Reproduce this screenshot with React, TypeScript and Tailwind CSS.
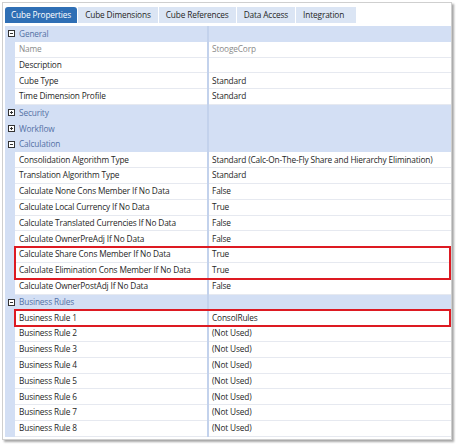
import { ReactNode } from "react";

type Row = { label: string; value?: string; muted?: boolean };

const tabs = ["Cube Properties", "Cube Dimensions", "Cube References", "Data Access", "Integration"];

function Toggle({ open }: { open: boolean }) {
  return (
    <svg width="7" height="7" viewBox="0 0 7 7" className="shrink-0">
      <rect x="0.5" y="0.5" width="6" height="6" fill="white" stroke="#333" />
      <line x1="2" y1="3.5" x2="5" y2="3.5" stroke="#333" />
      {!open && <line x1="3.5" y1="2" x2="3.5" y2="5" stroke="#333" />}
    </svg>
  );
}

function Group({ title, open = true }: { title: string; open?: boolean }) {
  return (
    <div className="flex h-[15.8px] items-center bg-[#d3dff4]">
      <div className="flex w-[202px] items-center gap-[4px] pl-[3px] text-[#5471a5]">
        <Toggle open={open} />
        <span>{title}</span>
      </div>
      <div className="h-full w-[2px] bg-[#c3d2ec]" />
      <div className="flex-1" />
    </div>
  );
}

function Prop({ label, value, muted }: Row) {
  const tone = muted ? "text-[#8a8a8a]" : "text-[#262626]";
  return (
    <div className="flex h-[15.8px] bg-[#d3dff4]">
      <div className="w-[10px]" />
      <div className={`flex w-[192px] items-center border-b border-[#e6e9f0] bg-white pl-[4px] ${tone}`}>
        {label}
      </div>
      <div className="h-full w-[2px] bg-[#c3d2ec]" />
      <div className={`flex flex-1 items-center border-b border-[#e6e9f0] bg-white pl-[3px] ${tone}`}>
        {value}
      </div>
    </div>
  );
}

// red highlight drawn over a run of rows
function Marked({ children }: { children: ReactNode }) {
  return (
    <div className="relative">
      {children}
      <div className="pointer-events-none absolute top-[-1px] bottom-[-1px] left-[9px] right-0 border-2 border-[#dd1a22]" />
    </div>
  );
}

const calc: Row[] = [
  { label: "Consolidation Algorithm Type", value: "Standard (Calc-On-The-Fly Share and Hierarchy Elimination)" },
  { label: "Translation Algorithm Type", value: "Standard" },
  { label: "Calculate None Cons Member If No Data", value: "False" },
  { label: "Calculate Local Currency If No Data", value: "True" },
  { label: "Calculate Translated Currencies If No Data", value: "False" },
  { label: "Calculate OwnerPreAdj If No Data", value: "False" },
];

export default function App() {
  return (
    <div
      className="h-[444px] w-[457px] bg-white p-[2px] text-[8.3px] leading-none tracking-[-0.15px] whitespace-nowrap"
      style={{ fontFamily: '"Open Sans", "Noto Sans", sans-serif' }}
    >
      <div className="h-[438px] w-[450px] border border-[#cfcfcf] bg-white px-[2px] pt-[4px] shadow-[2px_2px_2px_rgba(0,0,0,0.35)]">
        <div className="flex h-[16px] gap-[1px]">
          {tabs.map((t, i) => (
            <div
              key={t}
              className={`flex items-center ${
                i === 0
                  ? "rounded-t-[3px] bg-[#2f6fb5] px-[6px] text-white"
                  : "bg-[#dbe5f4] px-[7px] text-[#262626]"
              } ${i === 4 ? "pr-[12px]" : ""}`}
            >
              {t}
            </div>
          ))}
        </div>
        <div className="mt-[3px] w-[446px]">
          <Group title="General" />
          <Prop label="Name" value="StoogeCorp" muted />
          <Prop label="Description" />
          <Prop label="Cube Type" value="Standard" />
          <Prop label="Time Dimension Profile" value="Standard" />
          <Group title="Security" open={false} />
          <Group title="Workflow" open={false} />
          <Group title="Calculation" />
          {calc.map((r) => (
            <Prop key={r.label} {...r} />
          ))}
          <Marked>
            <Prop label="Calculate Share Cons Member If No Data" value="True" />
            <Prop label="Calculate Elimination Cons Member If No Data" value="True" />
          </Marked>
          <Prop label="Calculate OwnerPostAdj If No Data" value="False" />
          <Group title="Business Rules" />
          <Marked>
            <Prop label="Business Rule 1" value="ConsolRules" />
          </Marked>
          {[2, 3, 4, 5, 6, 7, 8].map((n) => (
            <Prop key={n} label={`Business Rule ${n}`} value="(Not Used)" />
          ))}
        </div>
      </div>
    </div>
  );
}
